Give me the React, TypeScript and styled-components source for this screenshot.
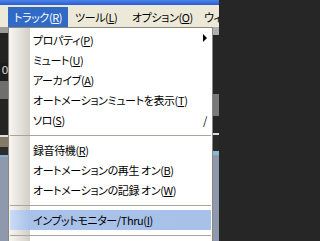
import React from "react";
import styled, { createGlobalStyle } from "styled-components";

const Global = createGlobalStyle`
  html, body { margin: 0; padding: 0; width: 219px; height: 241px; overflow: hidden; background: #262626; }
  #root { width: 219px; height: 241px; }
`;

const Page = styled.div`
  position: relative;
  width: 219px;
  height: 241px;
  overflow: hidden;
  display: flex;
  flex-direction: column;
  font-family: "Noto Sans CJK JP", "Noto Sans", sans-serif;
  font-feature-settings: "palt";
  font-size: 11px;
  letter-spacing: -0.4px;
`;

const TitleStrip = styled.div`
  height: 5px;
  flex: none;
  background: linear-gradient(#4c84ea, #2a5cd0);
`;

const MenuBar = styled.div`
  height: 22px;
  flex: none;
  box-sizing: border-box;
  padding: 2px 0 0 8px;
  display: flex;
  align-items: flex-end;
  background: #ece9d8;
  white-space: nowrap;
`;

const MenuTitle = styled.div<{ $active?: boolean; $w?: number }>`
  height: 20px;
  line-height: 20px;
  flex: none;
  box-sizing: border-box;
  width: ${(p) => (p.$w ? `${p.$w}px` : "auto")};
  padding-left: ${(p) => (p.$active ? "6px" : "7px")};
  color: ${(p) => (p.$active ? "#fff" : "#000")};
  background: ${(p) => (p.$active ? "#316ac5" : "transparent")};
`;

const Workspace = styled.div`
  flex: 1;
  display: flex;
`;

const SideCol = styled.div<{ $w: number }>`
  width: ${(p) => p.$w}px;
  display: flex;
  flex-direction: column;
  flex: none;
`;

const Filler = styled.div`
  flex: 1;
  background: #262626;
`;

const Strip = styled.div<{ $h: number; $c: string }>`
  height: ${(p) => p.$h}px;
  flex: none;
  background: ${(p) => p.$c};
  &:last-child { flex: 1; }
`;

const NumStrip = styled(Strip)`
  color: #d8d8d8;
  font-size: 11px;
  line-height: 16px;
  text-align: right;
  overflow: hidden;
  font-family: "DejaVu Sans", sans-serif;
`;

const Menu = styled.div`
  position: absolute;
  left: 8px;
  top: 27px;
  width: 205px;
  box-sizing: border-box;
  border: 1px solid #8a877c;
  padding: 2px 1px 24px 1px;
  background: linear-gradient(90deg, #f7f6f3 0px, #d2cfc6 21px, #ffffff 21px);
  display: flex;
  flex-direction: column;
`;

const Item = styled.div<{ $hover?: boolean }>`
  height: 20px;
  line-height: 20px;
  display: flex;
  align-items: center;
  padding: 0 3px 0 23px;
  color: #000;
  white-space: nowrap;
  background: ${(p) =>
    p.$hover
      ? "linear-gradient(90deg, #cadbf6 0px, #a9c2ea 20px, #a8c1e9 100%)"
      : "transparent"};
`;

const Label = styled.span`
  flex: 1;
`;

const Key = styled.u`
  text-decoration: underline;
  text-underline-offset: 1px;
`;

const Shortcut = styled.span`
  margin-right: 1px;
`;

const Arrow = styled.span`
  width: 0;
  height: 0;
  margin: 0 1px 4px 0;
  border-left: 4px solid #000;
  border-top: 4px solid transparent;
  border-bottom: 4px solid transparent;
`;

const Separator = styled.div`
  height: 10px;
  box-sizing: border-box;
  padding-top: 5px;
  &::after {
    content: "";
    display: block;
    height: 1px;
    background: #a6a597;
  }
`;

type Entry =
  | { kind: "item"; text: string; key: string; right?: "arrow" | string; hover?: boolean }
  | { kind: "sep" };

const entries: Entry[] = [
  { kind: "item", text: "プロパティ", key: "P", right: "arrow" },
  { kind: "item", text: "ミュート", key: "U" },
  { kind: "item", text: "アーカイブ", key: "A" },
  { kind: "item", text: "オートメーションミュートを表示", key: "T" },
  { kind: "item", text: "ソロ", key: "S", right: "/" },
  { kind: "sep" },
  { kind: "item", text: "録音待機", key: "R" },
  { kind: "item", text: "オートメーションの再生 オン", key: "B" },
  { kind: "item", text: "オートメーションの記録 オン", key: "W" },
  { kind: "sep" },
  { kind: "item", text: "インプットモニター/Thru", key: "I", hover: true },
  { kind: "sep" },
];

const leftStrips: [number, string][] = [
  [6, "#9c9c9c"],
  [30, "#232323"],
];
const leftLower: [number, string][] = [
  [2, "#1e1e1e"],
  [18, "#6f6f6f"],
  [36, "#242424"],
  [2, "#e0e0e0"],
  [10, "#857a68"],
  [8, "#2c2c2c"],
  [2, "#7ab0dc"],
  [80, "#8e99ad"],
];
const rightStrips: [number, string][] = [
  [8, "#b0b0b0"],
  [59, "#262626"],
  [22, "#7a7a7a"],
  [17, "#262626"],
  [2, "#dcdcdc"],
  [16, "#2a2a2a"],
  [4, "#8cb8d8"],
  [80, "#8e99ad"],
];

const titles = [
  { t: "トラック", k: "R", active: true, w: 60 },
  { t: "ツール", k: "L", w: 57 },
  { t: "オプション", k: "O", w: 72 },
  { t: "ウィンドウ", k: "W" },
];

export default function App() {
  return (
    <>
      <Global />
      <Page>
        <TitleStrip />
        <MenuBar>
          {titles.map((m) => (
            <MenuTitle key={m.t} $active={m.active} $w={m.w}>
              {m.t}(<Key>{m.k}</Key>)
            </MenuTitle>
          ))}
        </MenuBar>
        <Workspace>
          <SideCol $w={8}>
            {leftStrips.map(([h, c], i) => (
              <Strip key={i} $h={h} $c={c} />
            ))}
            <NumStrip $h={16} $c="#1e1e1e">0</NumStrip>
            {leftLower.map(([h, c], i) => (
              <Strip key={"l" + i} $h={h} $c={c} />
            ))}
          </SideCol>
          <Filler />
          <SideCol $w={6}>
            {rightStrips.map(([h, c], i) => (
              <Strip key={i} $h={h} $c={c} />
            ))}
          </SideCol>
        </Workspace>
        <Menu>
          {entries.map((e, i) =>
            e.kind === "sep" ? (
              <Separator key={i} />
            ) : (
              <Item key={i} $hover={e.hover}>
                <Label>
                  {e.text}(<Key>{e.key}</Key>)
                </Label>
                {e.right === "arrow" ? <Arrow /> : e.right ? <Shortcut>{e.right}</Shortcut> : null}
              </Item>
            )
          )}
        </Menu>
      </Page>
    </>
  );
}
